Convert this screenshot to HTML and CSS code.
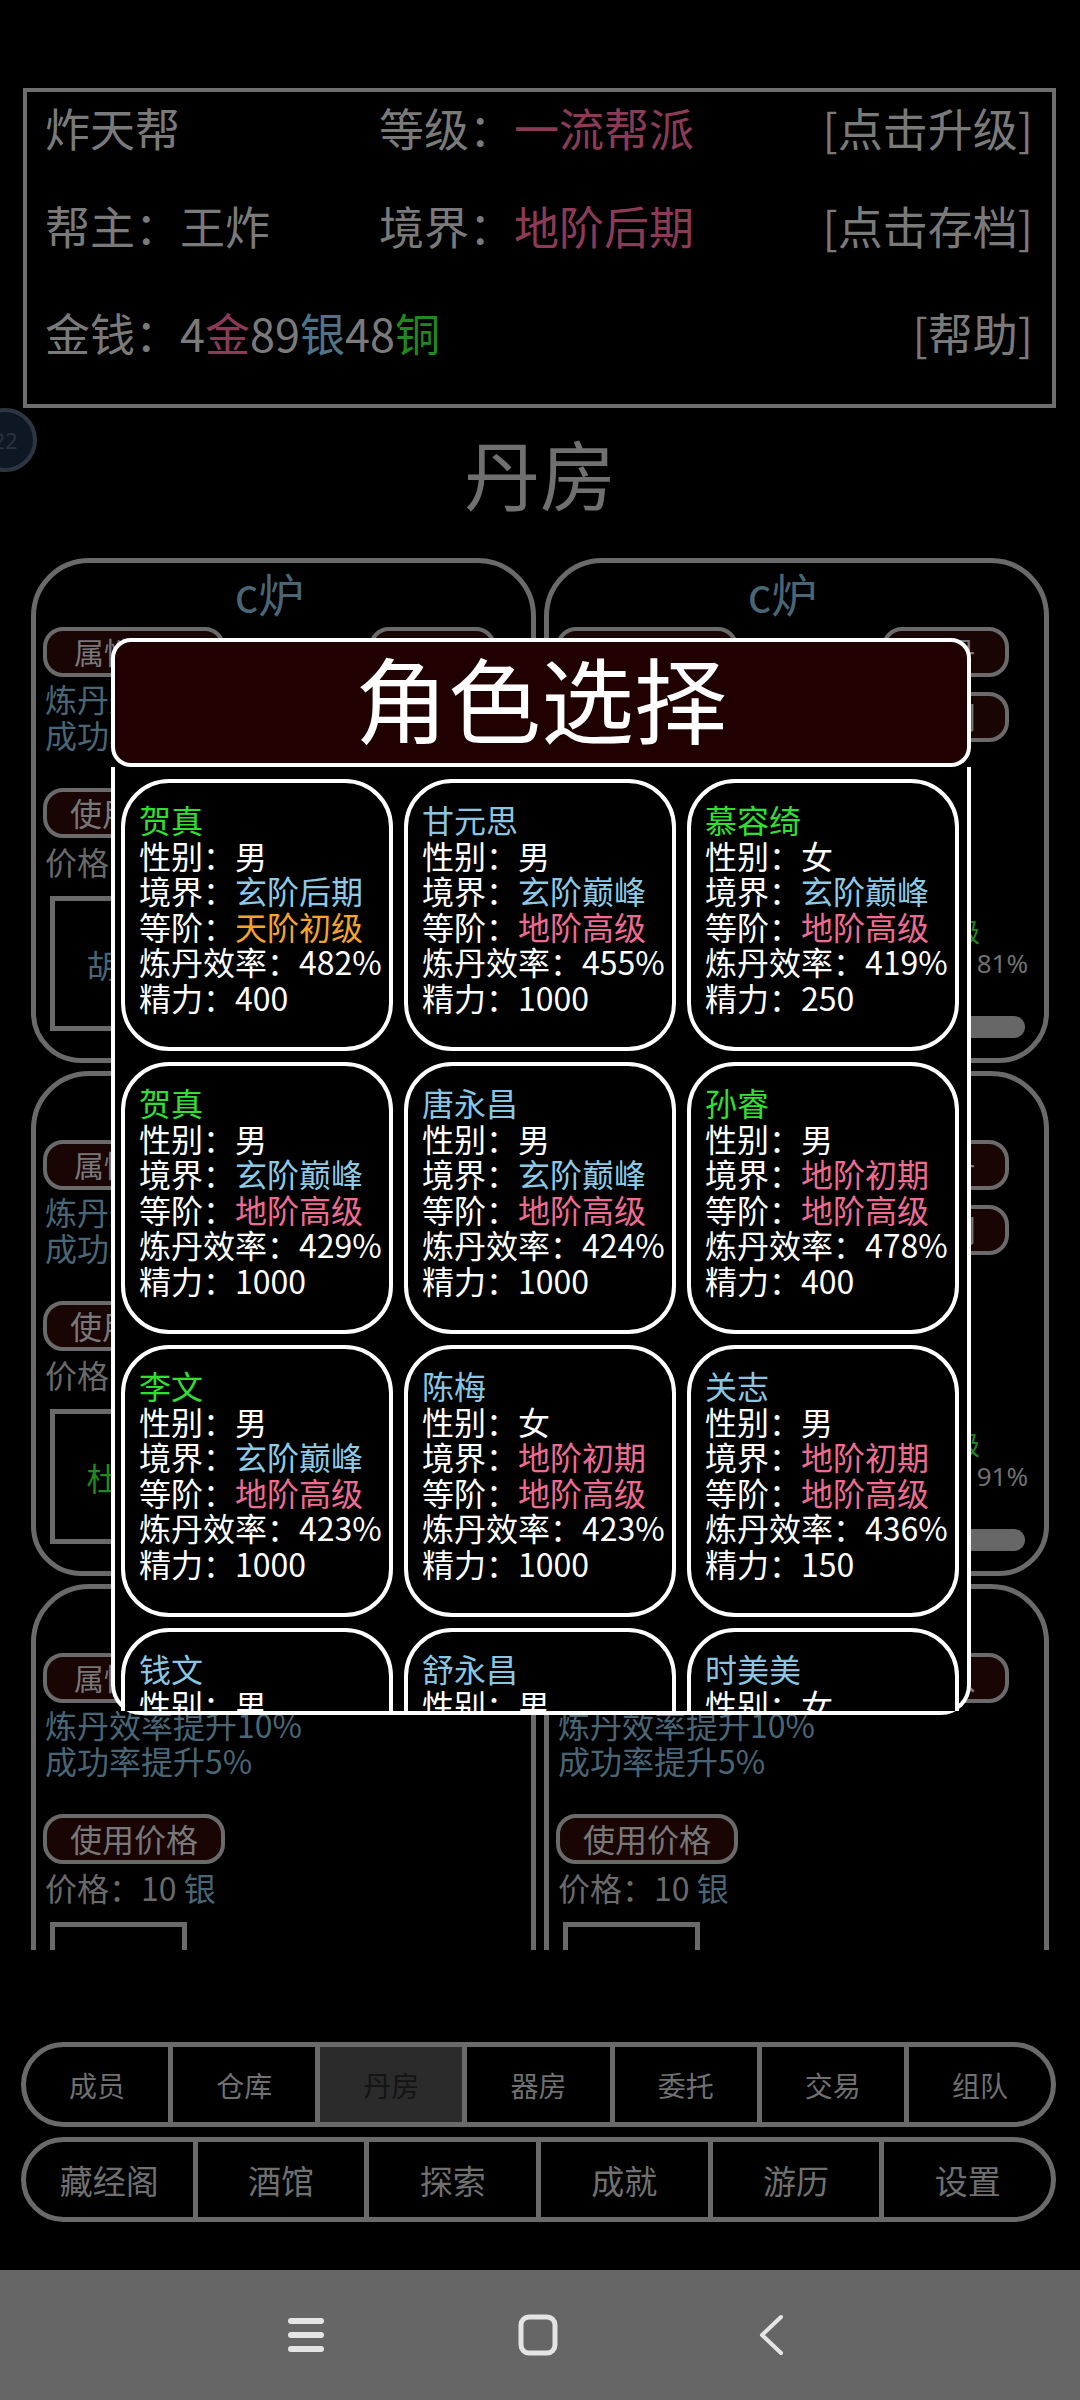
FILE: index.html
```html
<!DOCTYPE html>
<html lang="zh-CN">
<head>
<meta charset="utf-8">
<title>丹房</title>
<link rel="stylesheet" href="styles.css">
</head>
<body>
<div class="screen">
  <section class="gang">
    <div class="gang-row">
      <span>炸天帮</span>
      <span>等级：<em class="red">一流帮派</em></span>
      <span class="act">[点击升级]</span>
    </div>
    <div class="gang-row r2">
      <span>帮主：王炸</span>
      <span>境界：<em class="red">地阶后期</em></span>
      <span class="act">[点击存档]</span>
    </div>
    <div class="gang-row r3">
      <span class="money">金钱：4<em class="red">金</em>89<em class="blue">银</em>48<em class="green">铜</em></span>
      <span class="act">[帮助]</span>
    </div>
  </section>

  <div class="badge">22</div>

  <h1 class="room">丹房</h1>

  <div class="furnaces">
    <div class="furnace">
      <div class="f-title">c炉</div>
      <div class="f-top">
        <div class="f-left">
          <div class="fbtn wide">属性加成</div>
          <div class="f-line l1">炼丹效率提升10%</div>
          <div class="f-line">成功率提升5%</div>
          <div class="fbtn wide price-btn">使用价格</div>
          <div class="f-price">价格：10 <span class="steel">银</span></div>
        </div>
        <div class="f-right">
          <div class="fbtn small">收丹</div>
          <div class="fbtn small">炼制</div>
        </div>
      </div>
      <div class="f-bottom">
        <div class="herb steel">胡麻</div>
        <div class="f-stats">
          <div class="f-grade">下品三级</div>
          <div class="f-pct">76%</div>
          <div class="f-bar"></div>
        </div>
      </div>
    </div>

    <div class="furnace">
      <div class="f-title">c炉</div>
      <div class="f-top">
        <div class="f-left">
          <div class="fbtn wide">属性加成</div>
          <div class="f-line l1">炼丹效率提升10%</div>
          <div class="f-line">成功率提升5%</div>
          <div class="fbtn wide price-btn">使用价格</div>
          <div class="f-price">价格：10 <span class="steel">银</span></div>
        </div>
        <div class="f-right">
          <div class="fbtn small">收丹</div>
          <div class="fbtn small">炼制</div>
        </div>
      </div>
      <div class="f-bottom">
        <div class="herb steel">黄精</div>
        <div class="f-stats">
          <div class="f-grade">中品二级</div>
          <div class="f-pct">81%</div>
          <div class="f-bar"></div>
        </div>
      </div>
    </div>

    <div class="furnace">
      <div class="f-title">c炉</div>
      <div class="f-top">
        <div class="f-left">
          <div class="fbtn wide">属性加成</div>
          <div class="f-line l1">炼丹效率提升10%</div>
          <div class="f-line">成功率提升5%</div>
          <div class="fbtn wide price-btn">使用价格</div>
          <div class="f-price">价格：10 <span class="steel">银</span></div>
        </div>
        <div class="f-right">
          <div class="fbtn small">收丹</div>
          <div class="fbtn small">炼制</div>
        </div>
      </div>
      <div class="f-bottom">
        <div class="herb green">杜仲</div>
        <div class="f-stats">
          <div class="f-grade">下品一级</div>
          <div class="f-pct">88%</div>
          <div class="f-bar"></div>
        </div>
      </div>
    </div>

    <div class="furnace">
      <div class="f-title">c炉</div>
      <div class="f-top">
        <div class="f-left">
          <div class="fbtn wide">属性加成</div>
          <div class="f-line l1">炼丹效率提升10%</div>
          <div class="f-line">成功率提升5%</div>
          <div class="fbtn wide price-btn">使用价格</div>
          <div class="f-price">价格：10 <span class="steel">银</span></div>
        </div>
        <div class="f-right">
          <div class="fbtn small">收丹</div>
          <div class="fbtn small">炼制</div>
        </div>
      </div>
      <div class="f-bottom">
        <div class="herb green">灵芝</div>
        <div class="f-stats">
          <div class="f-grade">中品三级</div>
          <div class="f-pct">91%</div>
          <div class="f-bar"></div>
        </div>
      </div>
    </div>

    <div class="furnace">
      <div class="f-title">c炉</div>
      <div class="f-top">
        <div class="f-left">
          <div class="fbtn wide">属性加成</div>
          <div class="f-line l1">炼丹效率提升10%</div>
          <div class="f-line">成功率提升5%</div>
          <div class="fbtn wide price-btn">使用价格</div>
          <div class="f-price">价格：10 <span class="steel">银</span></div>
        </div>
        <div class="f-right">
          <div class="fbtn small">放入</div>
        </div>
      </div>
      <div class="f-bottom">
        <div class="herb steel"></div>
      </div>
    </div>

    <div class="furnace">
      <div class="f-title">c炉</div>
      <div class="f-top">
        <div class="f-left">
          <div class="fbtn wide">属性加成</div>
          <div class="f-line l1">炼丹效率提升10%</div>
          <div class="f-line">成功率提升5%</div>
          <div class="fbtn wide price-btn">使用价格</div>
          <div class="f-price">价格：10 <span class="steel">银</span></div>
        </div>
        <div class="f-right">
          <div class="fbtn small">放入</div>
        </div>
      </div>
      <div class="f-bottom">
        <div class="herb steel"></div>
      </div>
    </div>
  </div>

  <nav class="tabs t1">
    <div class="tab">成员</div>
    <div class="tab">仓库</div>
    <div class="tab sel">丹房</div>
    <div class="tab">器房</div>
    <div class="tab">委托</div>
    <div class="tab">交易</div>
    <div class="tab">组队</div>
  </nav>
  <nav class="tabs t2">
    <div class="tab">藏经阁</div>
    <div class="tab">酒馆</div>
    <div class="tab">探索</div>
    <div class="tab">成就</div>
    <div class="tab">游历</div>
    <div class="tab">设置</div>
  </nav>

  <div class="sysbar">
    <svg class="ic-menu" width="38" height="38" viewBox="0 0 38 38">
      <g stroke="#e4e4e4" stroke-width="6" stroke-linecap="round">
        <line x1="4" y1="5" x2="34" y2="5"/>
        <line x1="4" y1="19" x2="34" y2="19"/>
        <line x1="4" y1="33" x2="34" y2="33"/>
      </g>
    </svg>
    <svg class="ic-home" width="40" height="42" viewBox="0 0 40 42">
      <rect x="3" y="3" width="34" height="36" rx="8" fill="none" stroke="#e4e4e4" stroke-width="5"/>
    </svg>
    <svg class="ic-back" width="26" height="42" viewBox="0 0 26 42">
      <polyline points="23,3 4,21 23,39" fill="none" stroke="#e4e4e4" stroke-width="4" stroke-linecap="round" stroke-linejoin="round"/>
    </svg>
  </div>

  <div class="modal">
    <div class="m-head">角色选择</div>
    <div class="m-body">
      <div class="m-list">
        <div class="cc">
          <div class="nm g">贺真</div>
          <div>性别：男</div>
          <div>境界：<span class="vb">玄阶后期</span></div>
          <div>等阶：<span class="vo">天阶初级</span></div>
          <div>炼丹效率：482%</div>
          <div>精力：400</div>
        </div>
        <div class="cc">
          <div class="nm b">甘元思</div>
          <div>性别：男</div>
          <div>境界：<span class="vb">玄阶巅峰</span></div>
          <div>等阶：<span class="vp">地阶高级</span></div>
          <div>炼丹效率：455%</div>
          <div>精力：1000</div>
        </div>
        <div class="cc">
          <div class="nm g">慕容绮</div>
          <div>性别：女</div>
          <div>境界：<span class="vb">玄阶巅峰</span></div>
          <div>等阶：<span class="vp">地阶高级</span></div>
          <div>炼丹效率：419%</div>
          <div>精力：250</div>
        </div>

        <div class="cc">
          <div class="nm g">贺真</div>
          <div>性别：男</div>
          <div>境界：<span class="vb">玄阶巅峰</span></div>
          <div>等阶：<span class="vp">地阶高级</span></div>
          <div>炼丹效率：429%</div>
          <div>精力：1000</div>
        </div>
        <div class="cc">
          <div class="nm b">唐永昌</div>
          <div>性别：男</div>
          <div>境界：<span class="vb">玄阶巅峰</span></div>
          <div>等阶：<span class="vp">地阶高级</span></div>
          <div>炼丹效率：424%</div>
          <div>精力：1000</div>
        </div>
        <div class="cc">
          <div class="nm g">孙睿</div>
          <div>性别：男</div>
          <div>境界：<span class="vp">地阶初期</span></div>
          <div>等阶：<span class="vp">地阶高级</span></div>
          <div>炼丹效率：478%</div>
          <div>精力：400</div>
        </div>

        <div class="cc">
          <div class="nm g">李文</div>
          <div>性别：男</div>
          <div>境界：<span class="vb">玄阶巅峰</span></div>
          <div>等阶：<span class="vp">地阶高级</span></div>
          <div>炼丹效率：423%</div>
          <div>精力：1000</div>
        </div>
        <div class="cc">
          <div class="nm b">陈梅</div>
          <div>性别：女</div>
          <div>境界：<span class="vp">地阶初期</span></div>
          <div>等阶：<span class="vp">地阶高级</span></div>
          <div>炼丹效率：423%</div>
          <div>精力：1000</div>
        </div>
        <div class="cc">
          <div class="nm b">关志</div>
          <div>性别：男</div>
          <div>境界：<span class="vp">地阶初期</span></div>
          <div>等阶：<span class="vp">地阶高级</span></div>
          <div>炼丹效率：436%</div>
          <div>精力：150</div>
        </div>

        <div class="cc">
          <div class="nm b">钱文</div>
          <div>性别：男</div>
          <div>境界：<span class="vb">玄阶巅峰</span></div>
          <div>等阶：<span class="vp">地阶高级</span></div>
          <div>炼丹效率：410%</div>
          <div>精力：1000</div>
        </div>
        <div class="cc">
          <div class="nm b">舒永昌</div>
          <div>性别：男</div>
          <div>境界：<span class="vb">玄阶巅峰</span></div>
          <div>等阶：<span class="vp">地阶高级</span></div>
          <div>炼丹效率：405%</div>
          <div>精力：1000</div>
        </div>
        <div class="cc">
          <div class="nm b">时美美</div>
          <div>性别：女</div>
          <div>境界：<span class="vb">玄阶巅峰</span></div>
          <div>等阶：<span class="vp">地阶高级</span></div>
          <div>炼丹效率：402%</div>
          <div>精力：1000</div>
        </div>
      </div>
    </div>
  </div>
</div>
</body>
</html>
```

FILE: styles.css
```css
* {
  box-sizing: border-box;
  margin: 0;
  padding: 0;
}

html, body {
  background: #000;
}

body {
  width: 1080px;
  height: 2400px;
  overflow: hidden;
  font-family: "Noto Sans CJK SC", "Noto Sans", sans-serif;
}

em {
  font-style: normal;
}

.screen {
  position: relative;
  width: 1080px;
  height: 2400px;
  display: flex;
  flex-direction: column;
}

/* ---------- gang info box ---------- */
.gang {
  margin: 88px 24px 0 23px;
  height: 320px;
  border: 4px solid #6e6e6e;
  padding: 6px 19px 0 18px;
  color: #7a7a7a;
  font-size: 45px;
}

.gang-row {
  display: grid;
  grid-template-columns: 334px 1fr auto;
  height: 60px;
  line-height: 60px;
  white-space: nowrap;
}

.gang-row.r2 {
  margin-top: 38px;
}

.gang-row.r3 {
  margin-top: 47px;
}

.gang-row .money {
  grid-column: 1 / 3;
}

.gang-row .act {
  text-align: right;
}

.red { color: #8c3b57; }
.blue { color: #4f7488; }
.green { color: #1f8a1f; }
.steel { color: #4a6676; }

/* ---------- floating badge ---------- */
.badge {
  position: absolute;
  left: -27px;
  top: 408px;
  width: 64px;
  height: 64px;
  border-radius: 50%;
  background: #0d1824;
  border: 4px solid #2d3640;
  color: #28323c;
  font-size: 22px;
  line-height: 56px;
  text-align: center;
  font-family: "Noto Sans", sans-serif;
}

/* ---------- room title ---------- */
.room {
  margin: 14px 0 36px;
  height: 100px;
  line-height: 100px;
  text-align: center;
  font-size: 76px;
  font-weight: 400;
  color: #707070;
}

/* ---------- furnace list ---------- */
.furnaces {
  margin: 0 31px;
  height: 1392px;
  overflow: hidden;
  display: grid;
  grid-template-columns: 1fr 1fr;
  grid-auto-rows: 505px;
  gap: 8px;
}

.furnace {
  border: 5px solid #6a6a6a;
  border-radius: 58px 58px 50px 50px;
  padding: 0 35px 0 7px;
  display: flex;
  flex-direction: column;
}

.f-title {
  height: 64px;
  line-height: 58px;
  text-align: center;
  font-size: 46px;
  color: #4a6676;
}

.f-top {
  display: flex;
  justify-content: space-between;
  align-items: flex-start;
}

.f-left {
  display: flex;
  flex-direction: column;
}

.fbtn {
  height: 50px;
  border: 4px solid #6a6a6a;
  border-radius: 20px;
  background: #1a0505;
  color: #787878;
  font-size: 30px;
  line-height: 40px;
  text-align: center;
  white-space: nowrap;
  overflow: hidden;
}

.fbtn.wide {
  width: 182px;
}

.fbtn.small {
  width: 127px;
}

.fbtn.price-btn {
  margin-top: 36px;
  font-size: 32px;
}

.f-right {
  display: flex;
  flex-direction: column;
  gap: 15px;
}

.f-line {
  margin-left: 2px;
  font-size: 32px;
  line-height: 36px;
  color: #4a6676;
  white-space: nowrap;
}

.f-line.l1 {
  margin-top: 3px;
}

.f-price {
  margin: 5px 0 0 2px;
  font-size: 32px;
  line-height: 36px;
  color: #6a6a6a;
}

.f-bottom {
  margin-top: 17px;
  margin-right: -19px;
  display: flex;
  align-items: flex-start;
}

.herb {
  margin-left: 7px;
  width: 137px;
  height: 135px;
  flex: none;
  border: 5px solid #6a6a6a;
  display: flex;
  align-items: center;
  justify-content: center;
  font-size: 32px;
  white-space: nowrap;
}

.f-stats {
  flex: 1;
  margin-left: 24px;
  padding-top: 19px;
  display: flex;
  flex-direction: column;
  align-items: stretch;
}

.f-grade {
  text-align: right;
  padding-right: 48px;
  font-size: 26px;
  line-height: 32px;
  color: #1f8a1f;
}

.f-pct {
  text-align: right;
  font-size: 26px;
  line-height: 32px;
  color: #707070;
  font-family: "Noto Sans", sans-serif;
}

.f-bar {
  margin: 37px 3px 0 0;
  height: 22px;
  border-radius: 11px;
  background: #676767;
}

/* ---------- bottom tabs ---------- */
.tabs {
  margin: 0 24px 0 21px;
  height: 85px;
  border: 5px solid #6a6a6a;
  border-radius: 43px;
  overflow: hidden;
  display: flex;
}

.tabs.t1 {
  margin-top: 92px;
}

.tabs.t2 {
  margin-top: 10px;
}

.tab {
  flex: 1;
  display: flex;
  align-items: center;
  justify-content: center;
  color: #707070;
  white-space: nowrap;
}

.tab + .tab {
  border-left: 5px solid #6a6a6a;
}

.t1 .tab {
  font-size: 28px;
}

.t2 .tab {
  font-size: 33px;
}

.tab.sel {
  background: #2b2b2b;
  color: #141414;
}

/* ---------- system nav bar ---------- */
.sysbar {
  margin-top: 48px;
  height: 130px;
  background: #666666;
  display: flex;
  align-items: center;
  padding-left: 287px;
}

.ic-menu {
  margin-right: 193px;
}

.ic-home {
  margin-right: 200px;
}

/* ---------- modal ---------- */
.modal {
  position: absolute;
  left: 111px;
  top: 638px;
  width: 860px;
  height: 1077px;
  display: flex;
  flex-direction: column;
}

.m-head {
  height: 129px;
  flex: none;
  border: 4px solid #fff;
  border-radius: 20px;
  background: #200000;
  color: #fff;
  font-size: 93px;
  line-height: 109px;
  text-align: center;
}

.m-body {
  flex: 1;
  min-height: 0;
  border: 4px solid #fff;
  border-top: 0;
  border-radius: 0 0 30px 30px;
  background: #000;
}

.m-list {
  height: 100%;
  overflow: hidden;
  padding: 12px 8px 0 6px;
  display: grid;
  grid-template-columns: repeat(3, 272px);
  grid-auto-rows: 272px;
  column-gap: 11px;
  row-gap: 11px;
  align-content: start;
}

.cc {
  border: 4px solid #fff;
  border-radius: 48px;
  background: #000;
  padding: 19px 0 0 14px;
  font-size: 32px;
  line-height: 35.6px;
  color: #fff;
  white-space: nowrap;
  overflow: hidden;
}

.nm.g { color: #30e030; }
.nm.b { color: #8ac6e2; }
.vb { color: #8ccae6; }
.vp { color: #f06b92; }
.vo { color: #f5a32e; }
```
